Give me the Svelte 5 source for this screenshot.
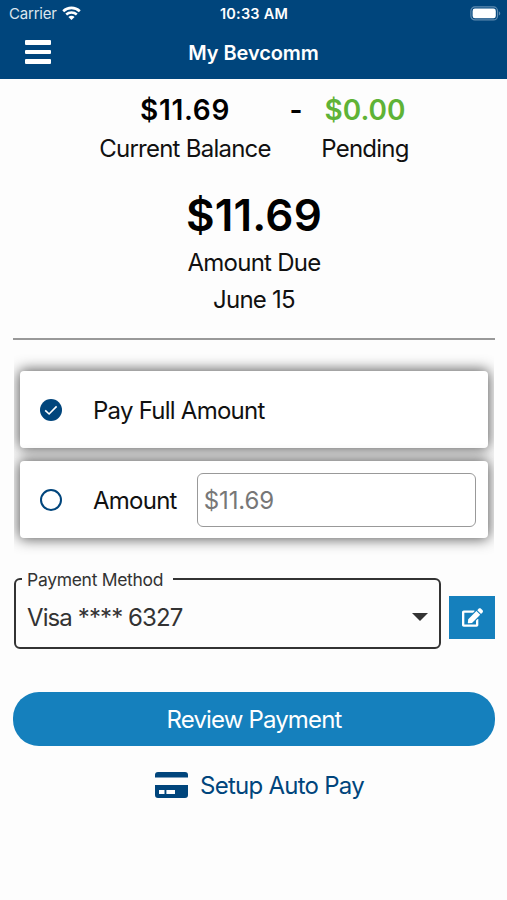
<script>
  let balance = 11.69;
  let pending = 0;
  let dueDate = "June 15";
  let payOption = "full";
  let customAmount = "";
  let paymentMethod = "Visa **** 6327";

  const money = (value) => `$${value.toFixed(2)}`;
</script>

<div class="app">
  <header>
    <div class="status">
      <div class="carrier">
        <span>Carrier</span>
        <svg width="19" height="14" viewBox="0 0 19 14" fill="none">
          <path d="M1.2 5.2C5.9 .7 13.1 .7 17.8 5.2" stroke="#fff" stroke-width="2.6" />
          <path d="M4.2 8.5C7.2 5.7 11.8 5.7 14.8 8.5" stroke="#fff" stroke-width="2.5" />
          <path d="M6.4 10.9C8.2 9.3 10.8 9.3 12.6 10.9L9.5 14Z" fill="#fff" />
        </svg>
      </div>
      <span class="clock">10:33 AM</span>
      <svg class="battery" width="31" height="15" viewBox="0 0 31 15">
        <rect x=".9" y=".9" width="26.6" height="13" rx="4" fill="none" stroke="#5f8bb0" stroke-width="1.2" />
        <rect x="2.6" y="2.6" width="23.2" height="9.6" rx="2.3" fill="#fff" />
        <path d="M28.9 5.2C30.7 5.9 30.7 8.9 28.9 9.6Z" fill="#5f8bb0" />
      </svg>
    </div>
    <div class="nav">
      <button class="menu" aria-label="Menu">
        <span></span>
        <span></span>
        <span></span>
      </button>
      <h1>My Bevcomm</h1>
    </div>
  </header>

  <main>
    <div class="balances">
      <strong class="current">{money(balance)}</strong>
      <strong>-</strong>
      <strong class="pending">{money(pending)}</strong>
      <span>Current Balance</span>
      <span></span>
      <span>Pending</span>
    </div>

    <div class="due">
      <strong>{money(balance)}</strong>
      <span>Amount Due</span>
      <span>{dueDate}</span>
    </div>

    <hr />

    <div class="options">
      <div class="card">
        <button class="radio" class:checked={payOption === "full"} aria-label="Pay full amount" on:click={() => (payOption = "full")}>
          {#if payOption === "full"}
            <svg width="22" height="22" viewBox="0 0 22 22" fill="none">
              <path d="M5.2 11.4L9.1 15L16.6 7.4" stroke="#fff" stroke-width="1.6" />
            </svg>
          {/if}
        </button>
        <span class="label">Pay Full Amount</span>
      </div>
      <div class="card">
        <button class="radio" class:checked={payOption === "other"} aria-label="Pay another amount" on:click={() => (payOption = "other")}>
          {#if payOption === "other"}
            <svg width="22" height="22" viewBox="0 0 22 22" fill="none">
              <path d="M5.2 11.4L9.1 15L16.6 7.4" stroke="#fff" stroke-width="1.6" />
            </svg>
          {/if}
        </button>
        <span class="label">Amount</span>
        <input bind:value={customAmount} placeholder={money(balance)} />
      </div>
    </div>

    <div class="method">
      <fieldset>
        <legend>Payment Method</legend>
        <div class="select">
          <span>{paymentMethod}</span>
          <svg width="16" height="8" viewBox="0 0 16 8"><path d="M0 0H16L8 8Z" fill="#333" /></svg>
        </div>
      </fieldset>
      <button class="edit" aria-label="Edit payment method">
        <svg width="21" height="19" viewBox="0 0 576 512" fill="#fff">
          <path d="M402.6 83.2l90.2 90.2c3.8 3.8 3.8 10 0 13.8L274.4 405.6l-92.8 10.3c-12.4 1.4-22.9-9.1-21.5-21.5l10.3-92.8L388.8 83.2c3.8-3.8 10-3.8 13.8 0zm162-22.9l-48.8-48.8c-15.2-15.2-39.9-15.2-55.2 0l-35.4 35.4c-3.8 3.8-3.8 10 0 13.8l90.2 90.2c3.8 3.8 10 3.8 13.8 0l35.4-35.4c15.2-15.3 15.2-40 0-55.2zM384 346.2V448H64V128h229.8c3.2 0 6.2-1.3 8.5-3.5l40-40c7.6-7.6 2.2-20.5-8.5-20.5H48C21.5 64 0 85.5 0 112v352c0 26.5 21.5 48 48 48h352c26.5 0 48-21.5 48-48V306.2c0-10.7-12.9-16-20.5-8.5l-40 40c-2.2 2.3-3.5 5.3-3.5 8.5z" />
        </svg>
      </button>
    </div>

    <button class="review">Review Payment</button>

    <button class="autopay">
      <svg width="33" height="26" viewBox="0 0 33 26" fill="#00457c">
        <path d="M3 0H30Q33 0 33 3V5.500H0V3Q0 0 3 0Z" />
        <path fill-rule="evenodd" d="M0 13H33V23Q33 26 30 26H3Q0 26 0 23ZM4 18V22H9.5V18ZM11.4 18V22H20V18Z" />
      </svg>
      <span>Setup Auto Pay</span>
    </button>
  </main>
</div>

<style>
  :global(body) {
    background: #fdfdfd;
  }

  .app {
    width: 507px;
    min-height: 900px;
    font-family: Inter, "Liberation Sans", sans-serif;
    font-size: 24px;
    color: #111;
    white-space: nowrap;
  }

  button {
    font: inherit;
    border: 0;
    padding: 0;
    background: none;
  }

  header {
    height: 79px;
    background: #00457c;
    color: #fff;
  }

  .status {
    display: grid;
    grid-template-columns: 1fr auto 1fr;
    align-items: center;
    height: 27px;
    padding: 0 6px 0 9px;
    font-size: 15px;
  }

  .carrier {
    display: flex;
    align-items: center;
    gap: 5px;
    color: #dce6ee;
    letter-spacing: -0.2px;
  }

  .carrier svg {
    margin-bottom: 2px;
  }

  .clock {
    margin-left: -2px;
    font-size: 14.5px;
    font-weight: 600;
    letter-spacing: 0.2px;
  }

  .battery {
    justify-self: end;
  }

  .nav {
    display: grid;
    grid-template-columns: 1fr auto 1fr;
    align-items: center;
    height: 50px;
    padding: 0 25px;
  }

  .menu {
    display: flex;
    flex-direction: column;
    gap: 5px;
    width: 26px;
  }

  .menu span {
    height: 4.5px;
    border-radius: 1px;
    background: #fff;
  }

  h1 {
    margin: 0;
    padding-top: 1px;
    font-size: 20px;
    font-weight: 600;
    letter-spacing: -0.1px;
  }

  main {
    display: flex;
    flex-direction: column;
    padding: 11px 12px 0 13px;
    letter-spacing: -0.75px;
  }

  .balances {
    display: grid;
    grid-template-columns: 172px 50px 88px;
    grid-template-rows: 39px 39px;
    align-items: center;
    justify-content: center;
    justify-items: center;
  }

  strong {
    font-size: 28px;
    font-weight: 600;
    letter-spacing: 0;
    color: #000;
  }

  .balances .current {
    letter-spacing: 0.7px;
  }

  .balances .pending {
    color: #5fb336;
  }

  .due {
    display: flex;
    flex-direction: column;
    align-items: center;
    line-height: 37px;
    padding-top: 18px;
  }

  .due strong {
    font-size: 44px;
    line-height: 58px;
    letter-spacing: 0.2px;
  }

  hr {
    width: 100%;
    height: 2px;
    margin: 20px 0 0;
    border: 0;
    background: #999;
  }

  .options {
    display: flex;
    flex-direction: column;
    gap: 13px;
    margin: 13px 1px 0 1px;
    padding: 18px 6px;
    overflow: hidden;
  }

  .card {
    display: flex;
    align-items: center;
    box-sizing: border-box;
    height: 77px;
    padding: 0 12px 0 20px;
    border-radius: 4px;
    background: #fff;
    box-shadow: 0 0 14px 1px #555;
  }

  .label {
    padding-top: 1px;
  }

  .radio {
    box-sizing: border-box;
    flex: none;
    width: 22px;
    height: 22px;
    margin-right: 31px;
    border: 2px solid #00457c;
    border-radius: 50%;
  }

  .radio.checked {
    border: 0;
    background: #00457c;
  }

  .radio svg {
    display: block;
  }

  input {
    box-sizing: border-box;
    flex: 1;
    min-width: 0;
    height: 54px;
    margin-left: 20px;
    padding: 2px 6px 0;
    border: 1px solid #999;
    border-radius: 6px;
    font: inherit;
    letter-spacing: -0.1px;
    background: #fff;
  }

  input::placeholder {
    color: #777;
    opacity: 1;
  }

  .method {
    display: flex;
    gap: 8px;
    margin-top: 13px;
  }

  fieldset {
    box-sizing: border-box;
    flex: none;
    width: 427px;
    height: 80px;
    margin: 0 0 0 1px;
    padding: 0 11px 0 6px;
    border: 2px solid #333;
    border-radius: 6px;
    color: #333;
  }

  legend {
    padding: 1px 10px 0 5px;
    font-size: 17.5px;
    line-height: 19px;
    letter-spacing: -0.3px;
  }

  .select {
    display: flex;
    align-items: center;
    justify-content: space-between;
    height: 56px;
    padding-left: 5px;
    letter-spacing: -0.9px;
  }

  .edit {
    display: flex;
    align-items: center;
    justify-content: center;
    width: 46px;
    height: 43px;
    margin-top: 27px;
    background: #1580bd;
  }

  .review {
    height: 54px;
    margin-top: 43px;
    border-radius: 26px;
    background: #1580bd;
    color: #fff;
    letter-spacing: -0.85px;
  }

  .autopay {
    display: flex;
    align-items: center;
    justify-content: center;
    gap: 12px;
    height: 36px;
    margin-top: 21px;
    padding-left: 11px;
    color: #00457c;
    letter-spacing: -0.75px;
  }
</style>
